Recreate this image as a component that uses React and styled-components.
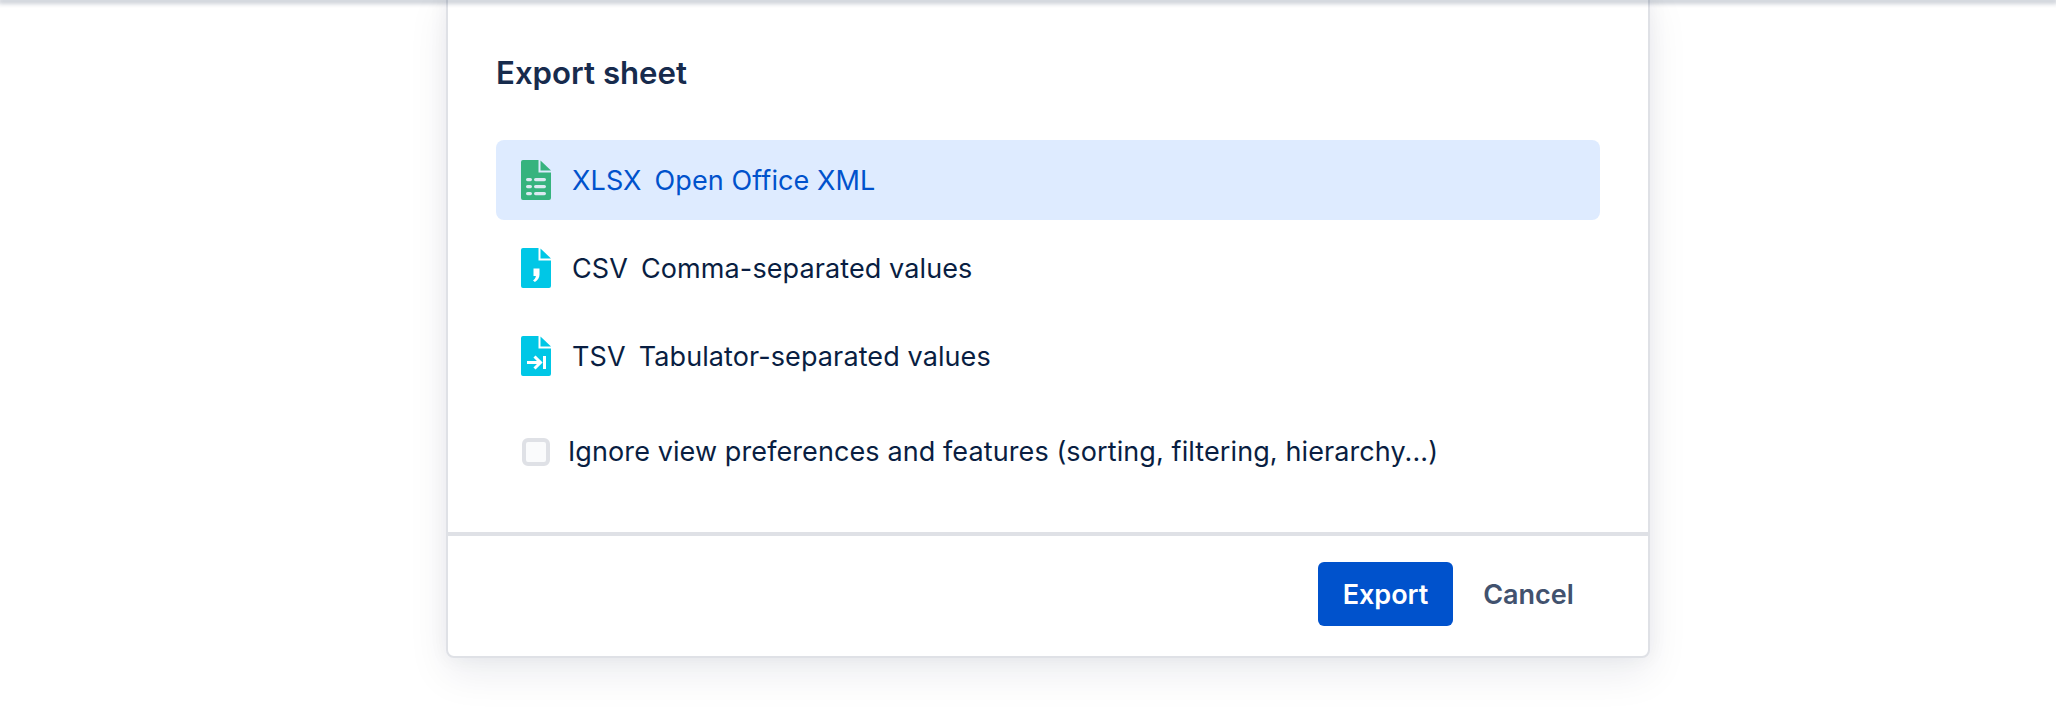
import React, { useState } from "react";
import styled, { createGlobalStyle } from "styled-components";

const GlobalStyle = createGlobalStyle`
  html, body {
    margin: 0;
    padding: 0;
    background: #fff;
    height: 100%;
    overflow: hidden;
  }
  body {
    font-family: Inter, "Liberation Sans", sans-serif;
  }
`;

const formats = [
  { id: "xlsx", name: "XLSX", label: "Open Office XML", color: "#36B37E" },
  { id: "csv", name: "CSV", label: "Comma-separated values", color: "#00C7E6" },
  { id: "tsv", name: "TSV", label: "Tabulator-separated values", color: "#00C7E6" },
];

const FileIcon = ({ type, color }) => (
  <Svg viewBox="0 0 30 40">
    <path
      fill={color}
      d="M2 0H17.5V12.5H30V38a2 2 0 0 1-2 2H2a2 2 0 0 1-2-2V2a2 2 0 0 1 2-2z"
    />
    <path fill={color} d="M19.5 0.5L30 10.5H19.5z" />
    {type === "xlsx" && (
      <g fill="#DCE9F2">
        <rect x="5" y="18" width="6" height="3.2" rx="1.6" />
        <rect x="13" y="18" width="12" height="3.2" rx="1.6" />
        <rect x="5" y="25" width="6" height="3.2" rx="1.6" />
        <rect x="13" y="25" width="12" height="3.2" rx="1.6" />
        <rect x="5" y="32" width="6" height="3.2" rx="1.6" />
        <rect x="13" y="32" width="12" height="3.2" rx="1.6" />
      </g>
    )}
    {type === "csv" && (
      <path fill="#fff" d="M12.5 20.5h6v6c0 3.2-1.6 5.6-4.6 7.5l-1.9-1.6c1.7-1.3 2.7-2.6 2.9-4.4h-2.4z" />
    )}
    {type === "tsv" && (
      <g fill="none" stroke="#fff" strokeWidth="3">
        <path d="M6 26.5h13" />
        <path d="M13.5 20.5l6 6-6 6" />
        <path d="M23.5 20v13" />
      </g>
    )}
  </Svg>
);

const App = () => {
  const [selected, setSelected] = useState("xlsx");
  const [ignorePrefs, setIgnorePrefs] = useState(false);

  return (
    <Page>
      <GlobalStyle />
      <TopShadow />
      <Dialog>
        <Body>
          <Title>Export sheet</Title>
          <FormatList>
            {formats.map((f) => (
              <FormatRow
                key={f.id}
                $active={selected === f.id}
                onClick={() => setSelected(f.id)}
              >
                <FileIcon type={f.id} color={f.color} />
                <FormatText>
                  <span>{f.name}</span>
                  <span>{f.label}</span>
                </FormatText>
              </FormatRow>
            ))}
          </FormatList>
          <CheckRow onClick={() => setIgnorePrefs(!ignorePrefs)}>
            <CheckBox $checked={ignorePrefs} />
            <CheckLabel>
              Ignore view preferences and features (sorting, filtering, hierarchy...)
            </CheckLabel>
          </CheckRow>
        </Body>
        <Footer>
          <PrimaryButton>Export</PrimaryButton>
          <SubtleButton>Cancel</SubtleButton>
        </Footer>
      </Dialog>
    </Page>
  );
};

export default App;

const Page = styled.div`
  width: 100%;
  height: 724px;
  overflow: hidden;
  background: #fff;
`;
const TopShadow = styled.div`
  position: relative;
  z-index: 2;
  height: 0;
  box-shadow: 0 1px 5px 2px rgba(9, 30, 66, 0.3);
`;
const Dialog = styled.div`
  width: 1204px;
  box-sizing: border-box;
  margin: -10px 0 0 446px;
  background: #fff;
  border: 2px solid #dfe1e6;
  border-radius: 8px;
  box-shadow: 0 16px 40px rgba(9, 30, 66, 0.08), 0 0 20px rgba(9, 30, 66, 0.05);
`;
const Body = styled.div`
  padding: 0 48px;
  height: 540px;
  box-sizing: border-box;
`;
const Title = styled.h2`
  margin: 0;
  padding-top: 63px;
  height: 75px;
  font-size: 31.2px;
  line-height: 36px;
  font-weight: 600;
  color: #172b4d;
`;
const FormatList = styled.div`
  display: flex;
  flex-direction: column;
  gap: 8px;
  margin-top: 10px;
`;
const FormatRow = styled.div`
  display: flex;
  align-items: center;
  gap: 21px;
  height: 80px;
  padding: 0 25px;
  border-radius: 8px;
  cursor: pointer;
  background: ${(p) => (p.$active ? "#DEEBFF" : "transparent")};
  color: ${(p) => (p.$active ? "#0052CC" : "#091E42")};
`;
const Svg = styled.svg`
  width: 30px;
  height: 40px;
  flex: none;
`;
const FormatText = styled.div`
  display: flex;
  gap: 13px;
  font-size: 27px;
  line-height: 32px;
  letter-spacing: 0.1px;
  padding-top: 1px;
`;
const CheckRow = styled.label`
  display: flex;
  align-items: center;
  gap: 18px;
  margin-top: 40px;
  padding-left: 26px;
  cursor: pointer;
`;
const CheckBox = styled.span`
  width: 28px;
  height: 28px;
  box-sizing: border-box;
  flex: none;
  border: 4px solid #dfe1e6;
  border-radius: 6px;
  background: ${(p) => (p.$checked ? "#0052CC" : "#FAFBFC")};
`;
const CheckLabel = styled.span`
  font-size: 27px;
  line-height: 32px;
  letter-spacing: 0.1px;
  color: #091e42;
`;
const Footer = styled.div`
  display: flex;
  align-items: center;
  justify-content: flex-end;
  gap: 8px;
  height: 124px;
  box-sizing: border-box;
  padding: 0 52px 4px 0;
  border-top: 4px solid #dfe1e6;
`;
const PrimaryButton = styled.button`
  width: 135px;
  height: 64px;
  padding: 0;
  border: none;
  border-radius: 6px;
  background: #0052cc;
  color: #fff;
  font-family: inherit;
  font-size: 27px;
  font-weight: 600;
  cursor: pointer;
`;
const SubtleButton = styled.button`
  width: 135px;
  height: 64px;
  padding: 0;
  border: none;
  background: transparent;
  color: #42526e;
  font-family: inherit;
  font-size: 27px;
  font-weight: 600;
  cursor: pointer;
`;
